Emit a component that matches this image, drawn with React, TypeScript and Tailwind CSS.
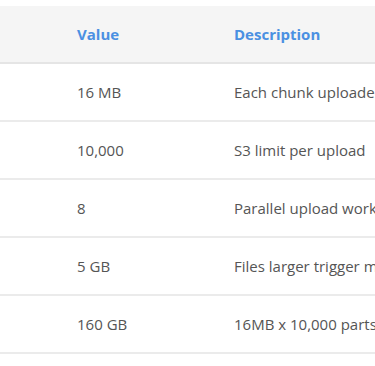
const rows = [
  { value: '16 MB', desc: 'Each chunk uploaded separately' },
  { value: '10,000', desc: 'S3 limit per upload' },
  { value: '8', desc: 'Parallel upload workers' },
  { value: '5 GB', desc: 'Files larger trigger multipart' },
  { value: '160 GB', desc: '16MB x 10,000 parts' },
];

export default function App() {
  return (
    <div className="w-[375px] h-[366px] overflow-hidden bg-white pt-[6px] font-['Open_Sans',sans-serif] text-[15px]">
      <table className="w-[600px] table-fixed border-collapse whitespace-nowrap">
        <colgroup>
          <col className="w-[77px]" />
          <col className="w-[157px]" />
          <col />
        </colgroup>
        <thead>
          <tr className="bg-[#f5f5f5] border-b-2 border-[#e5e5e5]">
            <th className="h-[57px]"></th>
            <th className="text-left font-bold text-[#4a90e2]">Value</th>
            <th className="text-left font-bold text-[#4a90e2]">Description</th>
          </tr>
        </thead>
        <tbody>
          {rows.map((r) => (
            <tr key={r.value} className="border-b-2 border-[#ebebeb]">
              <td className="h-[58px]"></td>
              <td className="text-[#555]">{r.value}</td>
              <td className="text-[#555]">{r.desc}</td>
            </tr>
          ))}
        </tbody>
      </table>
    </div>
  );
}
